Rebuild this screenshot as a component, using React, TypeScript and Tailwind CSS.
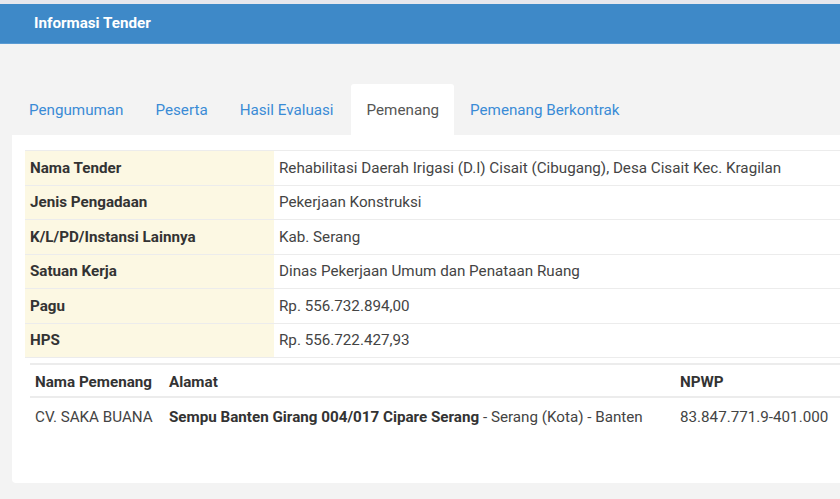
import React from "react";

const rows: [string, string][] = [
  ["Nama Tender", "Rehabilitasi Daerah Irigasi (D.I) Cisait (Cibugang), Desa Cisait Kec. Kragilan"],
  ["Jenis Pengadaan", "Pekerjaan Konstruksi"],
  ["K/L/PD/Instansi Lainnya", "Kab. Serang"],
  ["Satuan Kerja", "Dinas Pekerjaan Umum dan Penataan Ruang"],
  ["Pagu", "Rp. 556.732.894,00"],
  ["HPS", "Rp. 556.722.427,93"],
];

const tabs = ["Pengumuman", "Peserta", "Hasil Evaluasi", "Pemenang", "Pemenang Berkontrak"];

export default function App() {
  return (
    <div
      className="w-[840px] h-[499px] overflow-hidden bg-[#f3f3f3] text-[15.2px]"
      style={{ fontFamily: "Roboto, 'Noto Sans', sans-serif" }}
    >
      <div className="h-[4px] bg-[#e6e7ed]" />
      <div className="h-[40px] bg-[#3e89c8] border-b border-[#5a9bd3] flex items-center pl-[34px]">
        <span className="text-white font-bold">Informasi Tender</span>
      </div>
      <div className="pl-[12px] pt-[40px] w-[900px]">
        <div className="flex h-[51px] pl-[1px]">
          {tabs.map((t) =>
            t === "Pemenang" ? (
              <div
                key={t}
                className="ml-[1px] pl-[16px] pr-[15px] pt-[2px] flex items-center bg-white rounded-t-[3px] text-[#555]"
              >
                {t}
              </div>
            ) : (
              <div key={t} className="px-[16px] pt-[2px] flex items-center text-[#3a8bd6]">
                {t}
              </div>
            )
          )}
        </div>
        <div className="bg-white rounded-b-[4px] h-[348px] pl-[13px] pt-[15px]">
          <div className="border-t border-[#ececec]">
            {rows.map(([k, v]) => (
              <div key={k} className="flex h-[34.5px] border-b border-[#ececec]">
                <div className="w-[249px] bg-[#fcf8e3] pl-[5px] pt-[1px] flex items-center font-bold text-[#333]">
                  {k}
                </div>
                <div className="flex-1 pl-[5px] pt-[1px] flex items-center text-[#444]">{v}</div>
              </div>
            ))}
          </div>
          <div className="ml-[5px] mt-[5px]">
            <div className="grid grid-cols-[134px_511px_1fr] h-[35px] pt-[4px] border-t-2 border-b-2 border-[#ececec] items-center font-bold text-[#333]">
              <div className="pl-[5px]">Nama Pemenang</div>
              <div className="pl-[5px]">Alamat</div>
              <div className="pl-[5px]">NPWP</div>
            </div>
            <div className="grid grid-cols-[134px_511px_1fr] h-[36px] pt-[3px] items-center text-[#444]">
              <div className="pl-[5px]">CV. SAKA BUANA</div>
              <div className="pl-[5px]">
                <span className="font-bold text-[#333]">Sempu Banten Girang 004/017 Cipare Serang</span>
                {" - Serang (Kota) - Banten"}
              </div>
              <div className="pl-[5px]">83.847.771.9-401.000</div>
            </div>
          </div>
        </div>
      </div>
    </div>
  );
}
